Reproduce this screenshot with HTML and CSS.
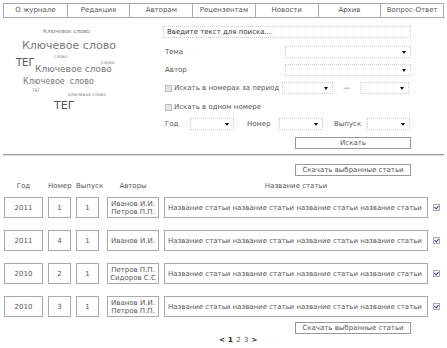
FILE: index.html
```html
<!DOCTYPE html>
<html lang="ru">

<head>
  <meta charset="UTF-8">
  <meta name="viewport" content="width=device-width, initial-scale=1.0">
  <title>Поиск статей</title>
  <link rel="stylesheet" href="styles.css">
</head>

<body>
  <ul class="nav">
    <li>О журнале</li>
    <li>Редакция</li>
    <li>Авторам</li>
    <li>Рецензентам</li>
    <li>Новости</li>
    <li>Архив</li>
    <li>Вопрос-Ответ</li>
  </ul>

  <div class="top">
    <!-- облако тегов -->
    <div class="cloud">
      <span class="w w1">Ключевое слово</span>
      <span class="w w2">Ключевое слово</span>
      <span class="w w3">слово</span>
      <span class="w w4">ТЕГ</span>
      <span class="w w5">слово</span>
      <span class="w w6">Ключевое слово</span>
      <span class="w w7">Ключевое&nbsp; слово</span>
      <span class="w w8">ТЕГ</span>
      <span class="w w9">ключевое слово</span>
      <span class="w w10">ТЕГ</span>
    </div>

    <form class="search">
      <div class="search-input">Введите текст для поиска...</div>

      <div class="row row-tema">
        <span>Тема</span>
        <span class="select wide"></span>
      </div>
      <div class="row row-author">
        <span>Автор</span>
        <span class="select wide"></span>
      </div>
      <div class="row row-period">
        <span class="check"></span>
        <span class="period-label">Искать в номерах за период</span>
        <span class="select mid"></span>
        <span class="dash">—</span>
        <span class="select mid2"></span>
      </div>
      <div class="row row-one">
        <span class="check"></span>
        <span>Искать в одном номере</span>
      </div>
      <div class="row row-year">
        <span class="lbl-year">Год</span>
        <span class="select small"></span>
        <span class="lbl-num">Номер</span>
        <span class="select small"></span>
        <span class="lbl-iss">Выпуск</span>
        <span class="select small2"></span>
      </div>
      <div class="btn btn-search">Искать</div>
    </form>
  </div>

  <hr class="sep">

  <div class="results">
    <div class="btn btn-dl">Скачать выбранные статьи</div>

    <div class="grid head">
      <span>Год</span>
      <span>Номер</span>
      <span>Выпуск</span>
      <span class="h-auth">Авторы</span>
      <span>Название статьи</span>
      <span></span>
    </div>

    <div class="grid item">
      <span class="cell">2011</span>
      <span class="cell">1</span>
      <span class="cell">1</span>
      <span class="cell auth">Иванов И.И.<br>Петров П.П.</span>
      <span class="cell title">Название статьи название статьи название статьи название статьи</span>
      <span class="tick"></span>
    </div>
    <div class="grid item">
      <span class="cell">2011</span>
      <span class="cell">4</span>
      <span class="cell">1</span>
      <span class="cell auth">Иванов И.И.</span>
      <span class="cell title">Название статьи название статьи название статьи название статьи</span>
      <span class="tick"></span>
    </div>
    <div class="grid item">
      <span class="cell">2010</span>
      <span class="cell">2</span>
      <span class="cell">1</span>
      <span class="cell auth">Петров П.П.<br>Сидоров С.С</span>
      <span class="cell title">Название статьи название статьи название статьи название статьи</span>
      <span class="tick"></span>
    </div>
    <div class="grid item">
      <span class="cell">2010</span>
      <span class="cell">3</span>
      <span class="cell">1</span>
      <span class="cell auth">Иванов И.И.<br>Петров П.П.</span>
      <span class="cell title">Название статьи название статьи название статьи название статьи</span>
      <span class="tick"></span>
    </div>

    <div class="btn btn-dl btn-dl2">Скачать выбранные статьи</div>

    <div class="pager"><b>&lt;</b> <b>1</b> 2 3 <b>&gt;</b></div>
  </div>
</body>

</html>
```

FILE: styles.css
```css
* {
  box-sizing: border-box;
}

body {
  margin: 0;
  width: 447px;
  font-family: "DejaVu Sans", Verdana, sans-serif;
  font-size: 7px;
  color: #555;
}

/* верхнее меню */
.nav {
  display: grid;
  grid-template-columns: repeat(7, 1fr);
  margin: 3px 3px 0;
  padding: 0;
  list-style: none;
  height: 15px;
  border: 1px solid #aaa;
}

.nav li {
  text-align: center;
  line-height: 13px;
  border-left: 1px solid #aaa;
}

.nav li:first-child {
  border-left: none;
}

.top {
  display: flex;
}

/* облако тегов */
.cloud {
  position: relative;
  width: 163px;
  height: 130px;
  color: #777;
}

.w {
  position: absolute;
  white-space: nowrap;
  line-height: 1;
}

.w1 { left: 43px; top: 11px; font-size: 5.5px; }
.w2 { left: 22px; top: 22px; font-size: 11px; }
.w3 { left: 54px; top: 37px; font-size: 4.5px; }
.w4 { left: 16px; top: 40px; font-size: 10px; color: #555; }
.w5 { left: 101px; top: 43px; font-size: 4.5px; }
.w6 { left: 35px; top: 47px; font-size: 9px; }
.w7 { left: 23px; top: 60px; font-size: 8px; }
.w8 { left: 32px; top: 71px; font-size: 4.5px; }
.w9 { left: 68px; top: 75px; font-size: 4.5px; }
.w10 { left: 54px; top: 82px; font-size: 11px; color: #555; }

/* форма поиска */
.search {
  width: 248px;
  margin: 0;
}

.search-input {
  margin-top: 8px;
  height: 12px;
  line-height: 11px;
  padding-left: 3px;
  border: 1px dotted #ccc;
  color: #333;
}

.row {
  display: flex;
  align-items: center;
  height: 12px;
  padding-left: 2px;
}

.row-tema { margin-top: 8px; justify-content: space-between; }
.row-author { margin-top: 6px; justify-content: space-between; }
.row-period { margin-top: 6px; }
.row-one { margin-top: 7px; }
.row-year { margin-top: 5px; }

.select {
  position: relative;
  height: 12px;
  border: 1px dotted #ccc;
  background: #fff;
}

.select::after {
  content: '';
  position: absolute;
  right: 4px;
  top: 4px;
  border-left: 2px solid transparent;
  border-right: 2px solid transparent;
  border-top: 3px solid #111;
}

.wide { width: 126px; }
.mid { width: 51px; margin-left: 3px; }
.mid2 { width: 49px; }
.small { width: 44px; }
.small2 { width: 43px; }

.dash {
  width: 27px;
  text-align: center;
}

.check {
  width: 7px;
  height: 7px;
  margin-right: 2px;
  border: 1px solid #bbb;
  background: #e6e6e6;
}

.lbl-year { width: 25px; }
.lbl-num { margin-left: 13px; width: 32px; }
.lbl-iss { margin-left: 11px; width: 33px; }

.btn {
  height: 12px;
  line-height: 10px;
  text-align: center;
  border: 1px solid #999;
  background: #fff;
  color: #555;
}

.btn-search {
  width: 116px;
  margin: 7px 0 0 132px;
}

.sep {
  margin: 5px 3px 0;
  height: 2px;
  border: none;
  border-top: 1px solid #999;
  border-bottom: 1px solid #ddd;
}

/* список статей */
.results {
  padding-left: 4px;
}

.btn-dl {
  width: 116px;
  margin: 8px 0 0 291px;
}

.grid {
  display: grid;
  grid-template-columns: 39px 23px 23px 55px 264px 9px;
  column-gap: 5px;
}

.head {
  margin-top: 6px;
  height: 9px;
  line-height: 9px;
  text-align: center;
}

.h-auth {
  margin-left: 3px;
}

.item {
  height: 21px;
  margin-top: 12px;
  align-items: stretch;
}

.head + .item {
  margin-top: 6px;
}

.cell {
  display: flex;
  align-items: center;
  justify-content: center;
  border: 1px solid #aaa;
}

.auth {
  margin-left: 3px;
  line-height: 8px;
  text-align: center;
}

.title {
  justify-content: flex-start;
  padding-left: 3px;
  white-space: nowrap;
}

.tick {
  align-self: center;
  position: relative;
  width: 7px;
  height: 7px;
  border: 1px solid #aab;
  background: #f4f4f8;
}

.tick::after {
  content: '';
  position: absolute;
  left: 1px;
  top: 0;
  width: 2px;
  height: 3px;
  border-right: 1px solid #2a4ea0;
  border-bottom: 1px solid #2a4ea0;
  transform: rotate(40deg);
}

.btn-dl2 {
  margin-top: 5px;
}

.pager {
  margin: 2px 0 0 215px;
  line-height: 9px;
  color: #555;
  word-spacing: 1px;
}

.pager b {
  color: #222;
}
```
